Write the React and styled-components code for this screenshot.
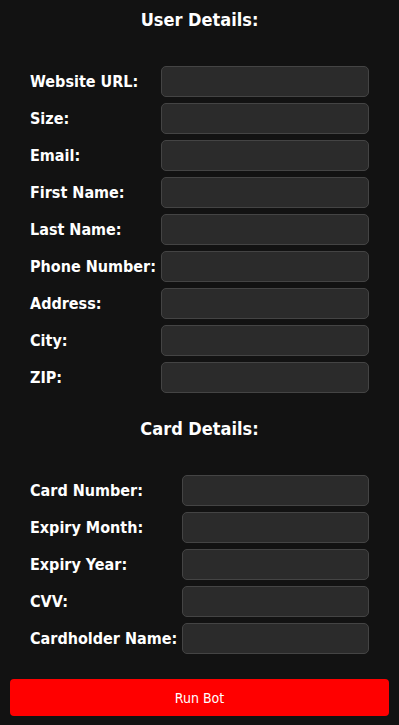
import React from 'react';
import styled, { createGlobalStyle } from 'styled-components';

const GlobalStyle = createGlobalStyle`
  html, body {
    margin: 0;
    padding: 0;
    background: #121212;
  }
  body {
    font-family: "DejaVu Sans Condensed", "DejaVu Sans", Tahoma, sans-serif;
    color: #fff;
  }
`;

const Page = styled.div`
  display: flex;
  flex-direction: column;
  padding: 9px 10px 10px;
  min-height: 725px;
  box-sizing: border-box;
`;

const SectionTitle = styled.h3`
  margin: ${({ first }) => (first ? '0' : '25px')} 0 35px;
  font-size: 18px;
  line-height: 22px;
  font-weight: bold;
  text-align: center;
`;

const FieldGrid = styled.div`
  display: grid;
  grid-template-columns: max-content 1fr;
  column-gap: 5px;
  row-gap: 6px;
  width: 339px;
  margin: 0 auto;
  align-items: center;
`;

const Label = styled.label`
  font-size: 16px;
  font-weight: bold;
  white-space: nowrap;
`;

const Input = styled.input`
  box-sizing: border-box;
  width: 100%;
  height: 31px;
  padding: 0 8px;
  background: #2b2b2b;
  border: 1px solid #444;
  border-radius: 5px;
  color: #fff;
  caret-color: #fff;
  font-family: inherit;
  font-size: 14px;
  outline: none;
`;

const RunButton = styled.button`
  margin-top: 25px;
  height: 37px;
  width: 100%;
  border: none;
  border-radius: 4px;
  background: #ff0000;
  color: #fff;
  font-family: "DejaVu Sans Condensed", "DejaVu Sans", Tahoma, sans-serif;
  font-size: 14px;
  cursor: pointer;
`;

const userFields = [
  'Website URL:',
  'Size:',
  'Email:',
  'First Name:',
  'Last Name:',
  'Phone Number:',
  'Address:',
  'City:',
  'ZIP:',
];

const cardFields = [
  'Card Number:',
  'Expiry Month:',
  'Expiry Year:',
  'CVV:',
  'Cardholder Name:',
];

function Fields({ labels, focusFirst }) {
  return (
    <FieldGrid>
      {labels.map((label, i) => (
        <React.Fragment key={label}>
          <Label>{label}</Label>
          <Input type="text" autoFocus={focusFirst && i === 0} />
        </React.Fragment>
      ))}
    </FieldGrid>
  );
}

export default function App() {
  return (
    <>
      <GlobalStyle />
      <Page>
        <SectionTitle first>User Details:</SectionTitle>
        <Fields labels={userFields} focusFirst />
        <SectionTitle>Card Details:</SectionTitle>
        <Fields labels={cardFields} />
        <RunButton>Run Bot</RunButton>
      </Page>
    </>
  );
}
